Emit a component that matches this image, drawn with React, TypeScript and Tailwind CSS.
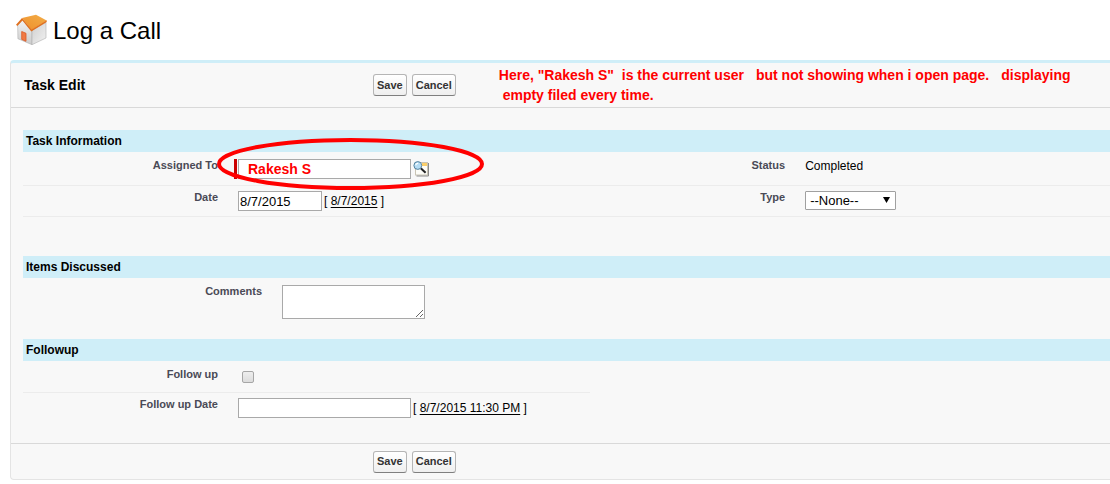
import React, { useState } from 'react';

const HouseIcon = () => (
  <svg className="h-8 w-8 shrink-0" viewBox="0 0 32 32" aria-hidden="true">
    <defs>
      <linearGradient id="roof" x1="0" y1="1" x2="1" y2="0">
        <stop offset="0" stopColor="#ee8f2c" />
        <stop offset="1" stopColor="#f3ae48" />
      </linearGradient>
      <linearGradient id="front" x1="0" y1="0" x2="0" y2="1">
        <stop offset="0" stopColor="#f2f2f2" />
        <stop offset="1" stopColor="#cccccc" />
      </linearGradient>
      <linearGradient id="side" x1="0" y1="0" x2="1" y2="1">
        <stop offset="0" stopColor="#cfcfcf" />
        <stop offset="1" stopColor="#f2f2f2" />
      </linearGradient>
    </defs>
    <path d="M2.7 11.5 L7.5 6 L17 17 V30.7 L2.9 24.7 Z" fill="url(#front)" stroke="#b0b0b0" strokeWidth="0.6" />
    <path d="M17 16 L31 8.5 V24 L17 30.7 Z" fill="url(#side)" stroke="#b0b0b0" strokeWidth="0.6" />
    <path d="M7 4 L21 0.7 L31.7 6.5 L16.5 16 Z" fill="url(#roof)" />
    <path d="M7 4 L1 10.8 L2.4 12 L7.4 6.4 L16.3 17.6 L31.7 8 V6.3 L16.6 15.6 Z" fill="#e0701f" />
    <path d="M6.7 17.5 L11 19.3 V27.3 L6.7 25.4 Z" fill="#f07a45" stroke="#d95a26" strokeWidth="0.8" />
  </svg>
);

const LookupIcon = () => (
  <svg className="h-4 w-4" viewBox="0 0 16 16" aria-hidden="true">
    <rect x="2.5" y="1.5" width="12" height="12.5" fill="#fdfdf8" stroke="#c9c4b4" />
    <rect x="9" y="2" width="5" height="3" fill="#fbcf6a" />
    <path d="M15.5 2 V15 H3.5" fill="none" stroke="#8a8a8a" />
    <path d="M7.8 7.2 L12.6 11.8" stroke="#222" strokeWidth="2" />
    <circle cx="4.8" cy="4.5" r="3.9" fill="#b4dcf4" stroke="#55809c" />
    <path d="M2.6 4.2 Q3.2 2.4 5.2 2.4" fill="none" stroke="#fff" strokeWidth="1.2" />
  </svg>
);

const FormButtons = () => (
  <div className="flex gap-[5px]">
    {['Save', 'Cancel'].map((label) => (
      <button
        key={label}
        type="button"
        className="h-[22px] rounded-[3px] border border-[#b5b5b5] border-b-[#7f7f7f] bg-linear-to-b from-white to-[#efefef] px-[3px] text-[11px] font-bold text-[#333]"
      >
        {label}
      </button>
    ))}
  </div>
);

const SectionTitle = ({ children }: { children: React.ReactNode }) => (
  <h3 className="h-[22px] bg-[#cfeef8] pl-[3px] text-xs leading-[22px] font-bold text-black">{children}</h3>
);

type FieldProps = {
  id?: string;
  label: string;
  wide?: boolean;
  children: React.ReactNode;
};

const Field = ({ id, label, wide, children }: FieldProps) => (
  <div className="flex items-start gap-5">
    <label
      htmlFor={id}
      className={`shrink-0 text-right text-[11px] leading-3 font-bold text-[#4a4a56] ${wide ? 'w-[239px]' : 'w-[195px]'}`}
    >
      {label}
    </label>
    {children}
  </div>
);

const DateLink = ({ text, onPick }: { text: string; onPick: () => void }) => (
  <span className="ml-0.5 text-xs leading-5">
    [{' '}
    <a
      href="#"
      className="underline underline-offset-2"
      onClick={(e) => {
        e.preventDefault();
        onPick();
      }}
    >
      {text}
    </a>{' '}
    ]
  </span>
);

const inputClass = 'h-5 border border-[#a9a9a9] bg-white px-px text-[13px] text-black';

export default function App() {
  const [assignedTo, setAssignedTo] = useState('Rakesh S');
  const [date, setDate] = useState('8/7/2015');
  const [followUpDate, setFollowUpDate] = useState('');

  return (
    <main className="overflow-hidden bg-white pb-1 pl-2.5 font-['Liberation_Sans',Arial,sans-serif] text-black">
      <div className="flex h-[60px] items-center gap-1.5 pl-[5px]">
        <HouseIcon />
        <h1 className="pt-0.5 text-2xl">Log a Call</h1>
      </div>

      <form
        className="rounded-l border-t-[3px] border-b border-l border-t-[#cfeef8] border-b-[#e4e4e4] border-l-[#e4e4e4] bg-[#f8f8f8]"
        onSubmit={(e) => e.preventDefault()}
      >
        <div className="flex h-[45px] items-center border-b border-[#d9d9d9] pl-[13px]">
          <h2 className="w-[349px] shrink-0 text-sm font-bold">Task Edit</h2>
          <FormButtons />
          <div className="ml-[43px] text-sm leading-5 font-bold whitespace-pre text-[#ff0000]">
            <p className="flex gap-3">
              <span>{'Here, "Rakesh S"  is the current user'}</span>
              <span>but not showing when i open page.</span>
              <span>displaying</span>
            </p>
            <p>{' empty filed every time.'}</p>
          </div>
        </div>

        <div className="pt-[22px] pl-3">
          <section>
            <SectionTitle>Task Information</SectionTitle>
            <div className="grid h-[34px] grid-cols-[12fr_11fr] border-b border-[#ececec] pt-[7px]">
              <Field id="assigned" label="Assigned To">
                <div className="relative flex items-center">
                  <span className="absolute -left-1 h-5 w-[3px] bg-[#c00]" />
                  <input
                    id="assigned"
                    value={assignedTo}
                    onChange={(e) => setAssignedTo(e.target.value)}
                    className="h-5 w-[173px] border border-[#a9a9a9] bg-white pl-[9px] text-sm font-bold text-[#ff0000]"
                  />
                  <button type="button" aria-label="Lookup" className="ml-0.5">
                    <LookupIcon />
                  </button>
                  <svg
                    className="pointer-events-none absolute -top-[21px] -left-[21px] h-[52px] w-[267px]"
                    viewBox="0 0 267 52"
                    aria-hidden="true"
                  >
                    <ellipse cx="133.5" cy="26" rx="131.5" ry="24" fill="none" stroke="#ff0000" strokeWidth="4" />
                  </svg>
                </div>
              </Field>
              <Field label="Status">
                <span className="text-xs leading-3.5">Completed</span>
              </Field>
            </div>
            <div className="grid h-[31px] grid-cols-[12fr_11fr] border-b border-[#ececec] pt-[5px]">
              <Field id="date" label="Date">
                <div className="flex">
                  <input
                    id="date"
                    value={date}
                    onChange={(e) => setDate(e.target.value)}
                    className={`w-[84px] ${inputClass}`}
                  />
                  <DateLink text="8/7/2015" onPick={() => setDate('8/7/2015')} />
                </div>
              </Field>
              <Field id="type" label="Type">
                <div className="relative">
                  <select
                    id="type"
                    className="block h-[19px] w-[91px] appearance-none rounded-[1px] border border-[#a0a0a0] bg-white pl-1 text-[13px] leading-4"
                  >
                    <option>--None--</option>
                    <option>Call</option>
                  </select>
                  <svg
                    className="pointer-events-none absolute top-1.5 right-1.5 h-1.5 w-[7px]"
                    viewBox="0 0 7 6"
                    aria-hidden="true"
                  >
                    <path d="M0 0 H7 L3.5 6 Z" />
                  </svg>
                </div>
              </Field>
            </div>
          </section>

          <section className="mt-[39px]">
            <SectionTitle>Items Discussed</SectionTitle>
            <div className="pt-[7px]">
              <Field id="comments" label="Comments" wide>
                <textarea id="comments" className="block h-[34px] w-[143px] border border-[#a9a9a9] bg-white text-[13px]" />
              </Field>
            </div>
          </section>

          <section className="mt-5">
            <SectionTitle>Followup</SectionTitle>
            <div className="grid grid-cols-[12fr_11fr]">
              <div>
                <div className="h-8 border-b border-[#ececec] pt-[7px]">
                  <Field id="followup" label="Follow up">
                    <input
                      id="followup"
                      type="checkbox"
                      className="mt-[3px] ml-1 h-3 w-3 appearance-none rounded-xs border border-[#a6a6a6] bg-linear-to-b from-[#eee] to-[#dcdcdc] checked:bg-[#777]"
                    />
                  </Field>
                </div>
                <div className="pt-[5px]">
                  <Field id="followup-date" label="Follow up Date">
                    <div className="flex">
                      <input
                        id="followup-date"
                        value={followUpDate}
                        onChange={(e) => setFollowUpDate(e.target.value)}
                        className={`w-[173px] ${inputClass}`}
                      />
                      <DateLink text="8/7/2015 11:30 PM" onPick={() => setFollowUpDate('8/7/2015 11:30 PM')} />
                    </div>
                  </Field>
                </div>
              </div>
            </div>
          </section>
        </div>

        <div className="mt-[25px] flex h-9 items-center border-t border-[#d9d9d9] pl-[362px]">
          <FormButtons />
        </div>
      </form>
    </main>
  );
}
